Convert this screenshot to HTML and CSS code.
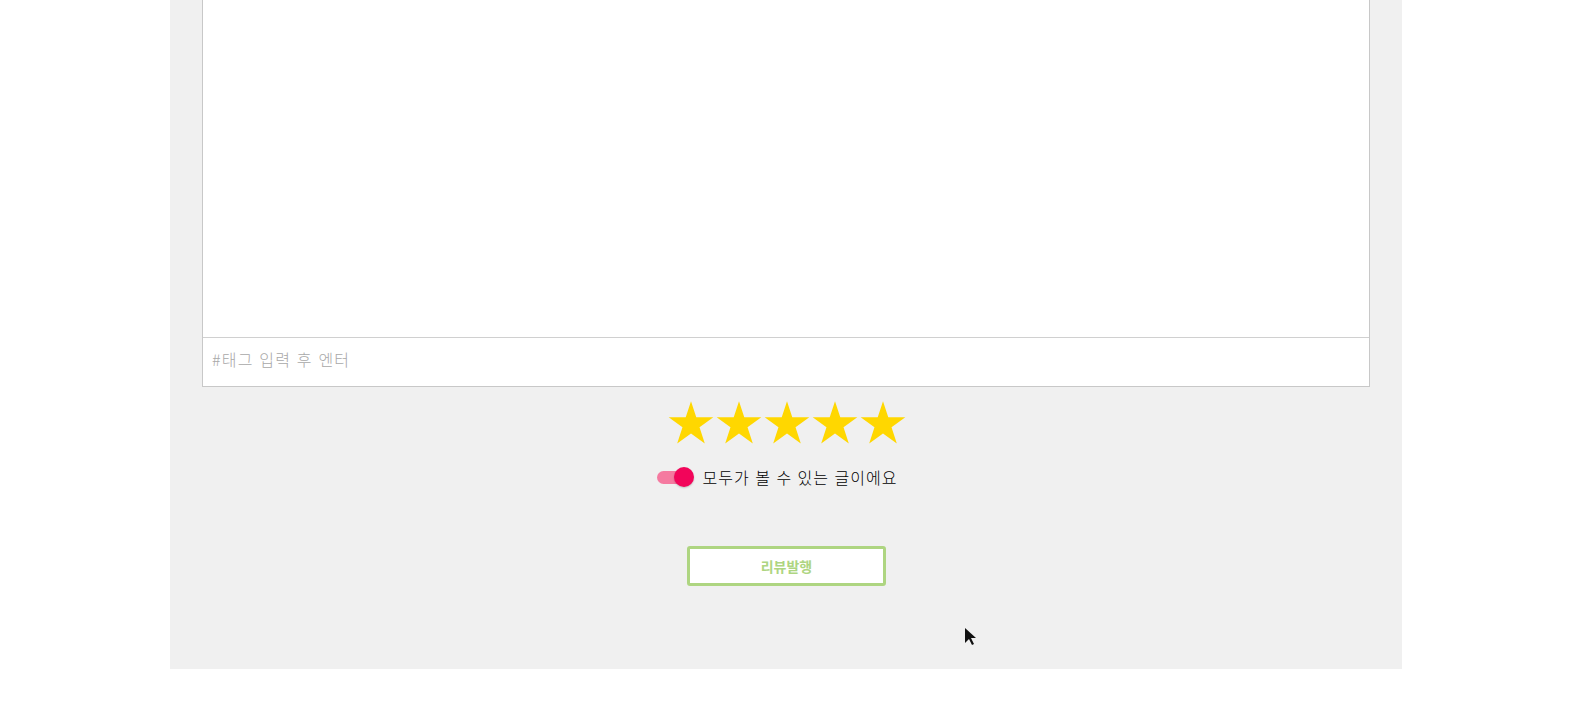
FILE: index.html
```html
<!DOCTYPE html>
<html lang="ko">
<head>
<meta charset="utf-8">
<title>리뷰 작성</title>
<link rel="stylesheet" href="styles.css">
</head>
<body>
<div class="panel">
  <div class="editor">
    <div class="editor-body"></div>
    <div class="tag-input">#태그 입력 후 엔터</div>
  </div>
  <div class="stars">
    <svg class="star" viewBox="0 0 24 24"><path d="M12 0.6l2.75 8.45h8.9l-7.2 5.23 2.75 8.47L12 17.520l-7.2 5.23 2.75-8.47-7.2-5.23h8.9z"/></svg>
    <svg class="star" viewBox="0 0 24 24"><path d="M12 0.6l2.75 8.45h8.9l-7.2 5.23 2.75 8.47L12 17.52l-7.2 5.23 2.75-8.47-7.2-5.23h8.9z"/></svg>
    <svg class="star" viewBox="0 0 24 24"><path d="M12 0.6l2.75 8.45h8.9l-7.2 5.23 2.75 8.47L12 17.52l-7.2 5.23 2.75-8.47-7.2-5.23h8.9z"/></svg>
    <svg class="star" viewBox="0 0 24 24"><path d="M12 0.6l2.75 8.45h8.9l-7.2 5.23 2.75 8.47L12 17.52l-7.2 5.23 2.75-8.47-7.2-5.23h8.9z"/></svg>
    <svg class="star" viewBox="0 0 24 24"><path d="M12 0.6l2.75 8.45h8.9l-7.2 5.23 2.75 8.47L12 17.52l-7.2 5.23 2.75-8.47-7.2-5.23h8.9z"/></svg>
  </div>
  <div class="visibility">
    <span class="switch"><span class="track"></span><span class="knob"></span></span>
    <span class="vis-label">모두가 볼 수 있는 글이에요</span>
  </div>
  <div class="actions">
    <button class="publish">리뷰발행</button>
  </div>
</div>
<svg class="cursor" width="14" height="22" viewBox="0 0 14 22"><path d="M1 1v15l4-4 3 6 2-1-3-6h5z" fill="#111"/></svg>
</body>
</html>
```
FILE: styles.css
```css
html, body {
  margin: 0;
  padding: 0;
  background: #fff;
  font-family: "Noto Sans CJK KR", "Noto Sans", sans-serif;
}
body {
  position: relative;
  height: 723px;
  overflow: hidden;
}
.panel {
  width: 1168px;
  margin: 0 auto 0 170px;
  padding: 0 32px 83px;
  background: #f0f0f0;
  display: flex;
  flex-direction: column;
  align-items: center;
}
.editor {
  align-self: stretch;
  background: #fff;
  border: 1px solid #c8c8c8;
  border-top: none;
}
.editor-body {
  height: 337px;
  border-bottom: 1px solid #d0d0d0;
}
.tag-input {
  height: 48px;
  box-sizing: border-box;
  padding: 0 9px 6px;
  display: flex;
  align-items: center;
  font-size: 16px;
  font-weight: 300;
  letter-spacing: 1.2px;
  color: #a8a8a8;
}
.stars {
  display: flex;
  gap: 2px;
  margin-top: 13px;
  margin-left: 2px;
}
.star {
  width: 46px;
  height: 46px;
  fill: #ffd700;
}
.visibility {
  display: flex;
  align-items: center;
  margin-top: 19px;
  gap: 9px;
  margin-left: -18px;
}
.switch {
  position: relative;
  width: 37px;
  height: 20px;
  display: inline-block;
}
.track {
  position: absolute;
  left: 0;
  top: 4px;
  width: 30px;
  height: 13px;
  border-radius: 7px;
  background: #f57aa0;
}
.knob {
  position: absolute;
  left: 17px;
  top: 0;
  width: 20px;
  height: 20px;
  border-radius: 50%;
  background: #f2055a;
  box-shadow: 0 1px 2px rgba(0,0,0,0.2);
}
.vis-label {
  font-size: 16px;
  font-weight: 300;
  letter-spacing: 1px;
  color: #000;
}
.actions {
  margin-top: 57px;
}
.publish {
  width: 199px;
  height: 40px;
  background: #fff;
  border: 3px solid #aed581;
  border-radius: 3px;
  color: #aed581;
  font-family: "Noto Sans CJK KR", "Noto Sans", sans-serif;
  font-weight: 700;
  font-size: 14px;
  padding: 0;
  margin-left: 1px;
}
.cursor {
  position: absolute;
  left: 964px;
  top: 627px;
}
```
